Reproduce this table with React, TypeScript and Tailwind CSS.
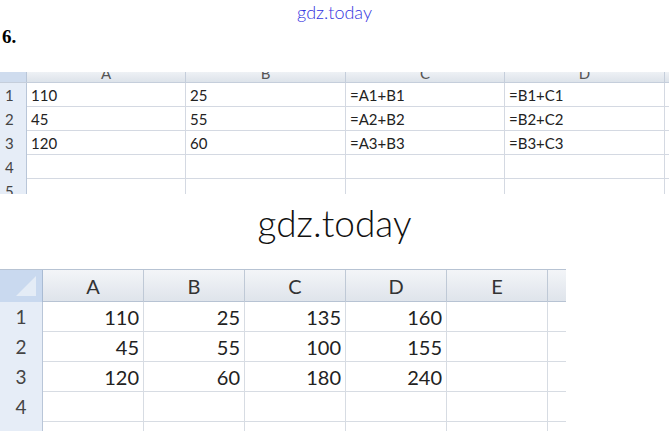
import React from "react";

const cols1 = ["A", "B", "C", "D"];
const rows1 = [
  ["110", "25", "=A1+B1", "=B1+C1"],
  ["45", "55", "=A2+B2", "=B2+C2"],
  ["120", "60", "=A3+B3", "=B3+C3"],
  ["", "", "", ""],
];

const cols2 = ["A", "B", "C", "D", "E"];
const rows2 = [
  ["110", "25", "135", "160", ""],
  ["45", "55", "100", "155", ""],
  ["120", "60", "180", "240", ""],
  ["", "", "", "", ""],
];

const grid1 = "grid grid-cols-[27px_159px_160px_159px_160px_4px]";
const grid2 = "grid grid-cols-[43px_101px_101px_101px_101px_101px_18px]";

function FormulaSheet() {
  return (
    <div className="text-[15px] text-[#222]" style={{ fontFamily: "Lato, 'Open Sans', sans-serif" }}>
      <div className={`${grid1} h-[11px] overflow-hidden bg-gradient-to-b from-[#eef1f5] to-[#dde3ea] border-b border-[#c5cedb]`}>
        <div className="bg-[#cfdcee] border-r border-[#b9c6d8]" />
        {cols1.map((c) => (
          <div key={c} className="border-r border-[#c5cedb] text-center text-[#555] leading-[12px] pt-[1px] -mt-[6px]">
            {c}
          </div>
        ))}
        <div />
      </div>
      {rows1.map((r, i) => (
        <div key={i} className={`${grid1} h-[24px] border-b border-[#d4d9e2]`}>
          <div className="bg-[#e6edf7] border-r border-[#b9c6d8] pl-[5px] leading-[24px] text-[#444]">{i + 1}</div>
          {r.map((v, j) => (
            <div key={j} className="border-r border-[#d4d9e2] pl-[4px] leading-[24px]">
              {v}
            </div>
          ))}
          <div />
        </div>
      ))}
      <div className={`${grid1} h-[15px] overflow-hidden`}>
        <div className="bg-[#e6edf7] border-r border-[#b9c6d8] pl-[5px] leading-[24px] text-[#444]">5</div>
        {cols1.map((c) => (
          <div key={c} className="border-r border-[#d4d9e2]" />
        ))}
        <div />
      </div>
    </div>
  );
}

function ResultSheet() {
  return (
    <div className="w-[566px] text-[20px] text-[#222]" style={{ fontFamily: "Lato, 'Open Sans', sans-serif" }}>
      <div className={`${grid2} h-[33px] border-t border-[#a8bdd8] bg-gradient-to-b from-[#f3f5f8] to-[#dfe4eb] border-b border-[#b7c3d3]`}>
        <div className="relative bg-[#c9d9ef] border-r border-[#a9bbd3]">
          <div className="absolute right-[6px] bottom-[6px] w-0 h-0 border-l-[20px] border-l-transparent border-b-[20px] border-b-[#e4ecf6]" />
        </div>
        {cols2.map((c) => (
          <div key={c} className="border-r border-[#bfc9d6] text-center leading-[32px] text-[#333]">
            {c}
          </div>
        ))}
        <div />
      </div>
      {rows2.map((r, i) => (
        <div key={i} className={`${grid2} h-[30px] border-b border-[#d7dce3]`}>
          <div className="bg-[#e6edf7] border-r border-[#b9c6d8] text-center leading-[30px] text-[19px] text-[#444]">{i + 1}</div>
          {r.map((v, j) => (
            <div key={j} className="border-r border-[#d7dce3] text-right pr-[4px] leading-[30px]">
              {v}
            </div>
          ))}
          <div />
        </div>
      ))}
      <div className={`${grid2} h-[10px]`}>
        <div className="bg-[#e6edf7] border-r border-[#b9c6d8]" />
        {cols2.map((c) => (
          <div key={c} className="border-r border-[#d7dce3]" />
        ))}
        <div />
      </div>
    </div>
  );
}

export default function App() {
  return (
    <div className="w-[669px] h-[431px] overflow-hidden bg-white">
      <div className="h-[26px] pt-[2px] text-center text-[18px] leading-[20px] text-[#3434e0]" style={{ fontFamily: "Lato, 'DejaVu Sans', sans-serif", fontWeight: 300 }}>
        gdz.today
      </div>
      <div className="h-[46px] pl-[2px] text-[19px] font-bold leading-[22px] text-black" style={{ fontFamily: "'Liberation Serif', serif" }}>
        6.
      </div>
      <FormulaSheet />
      <div className="h-[75px] pt-[7px] text-center text-[37px] leading-[44px] text-[#111]" style={{ fontFamily: "Lato, 'DejaVu Sans', sans-serif", fontWeight: 300 }}>
        gdz.today
      </div>
      <ResultSheet />
    </div>
  );
}
